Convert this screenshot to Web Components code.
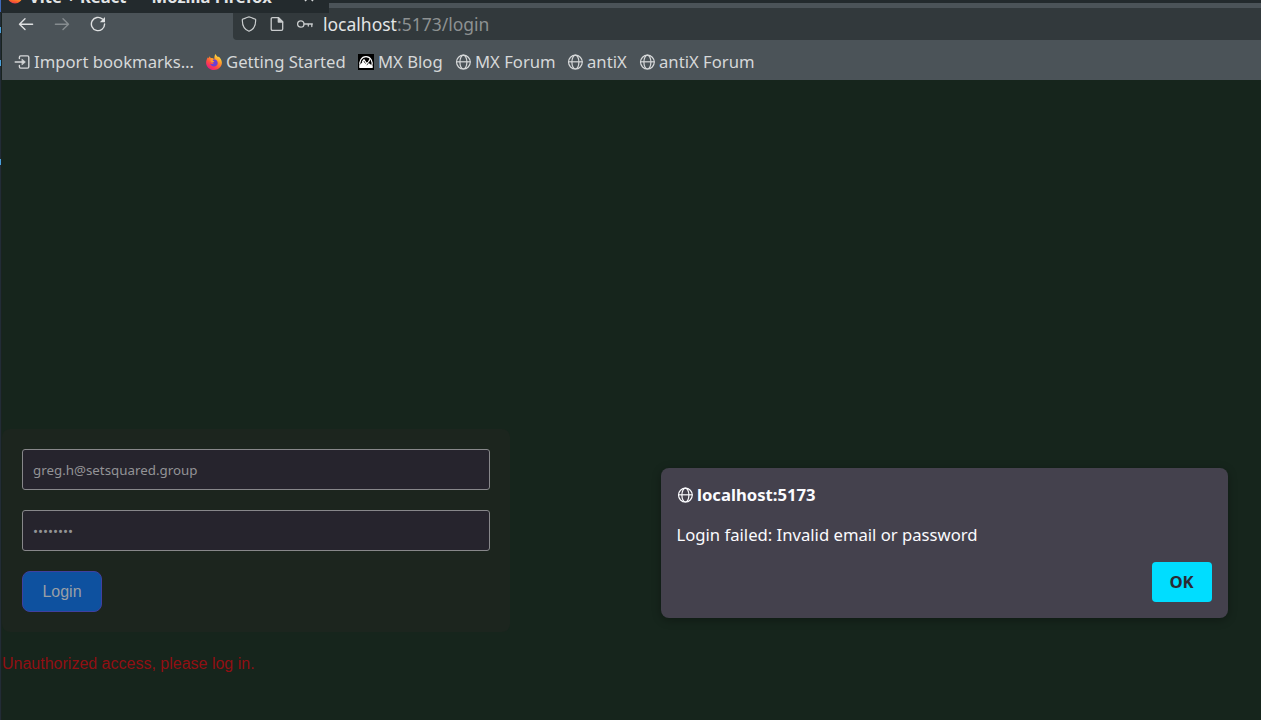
<!DOCTYPE html>
<html lang="en"><head><meta charset="utf-8"><title>Vite + React</title>
<style>html,body{margin:0;height:720px;overflow:hidden;background:#16251c}</style></head><body>
<browser-window></browser-window>
<script>
const define=(name,html)=>{const t=document.createElement('template');t.innerHTML=html;
customElements.define(name,class extends HTMLElement{constructor(){super();this.attachShadow({mode:'open'}).append(t.content.cloneNode(true));}});};

const icons={
globe:`<svg viewBox="0 0 16 16" fill="none" stroke="currentColor" stroke-width="1.2"><circle cx="8.400" cy="8.100" r="6.900"/><ellipse cx="8.400" cy="8.100" rx="3.500" ry="6.900"/><path d="M1.500 7.800h14"/></svg>`,
import:`<svg viewBox="0 0 16 16" fill="none" stroke="currentColor" stroke-width="1.4" stroke-linecap="round" stroke-linejoin="round"><path d="M5.400 4.600V3.200q0-1.300 1.300-1.300h6.800q1.300 0 1.300 1.300v9.600q0 1.300-1.300 1.300H6.700q-1.300 0-1.300-1.300v-1.400M1.200 8h8.400"/><path d="M8.200 5.200L11.400 8l-3.200 2.800z" fill="currentColor" stroke-width=".6"/></svg>`,
back:`<svg viewBox="0 0 16 16" fill="none" stroke="currentColor" stroke-width="1.4" stroke-linecap="round" stroke-linejoin="round"><path d="M14.600 8.200H1.600M7 2.800L1.500 8.200 7 13.600"/></svg>`,
forward:`<svg viewBox="0 0 16 16" fill="none" stroke="currentColor" stroke-width="1.4" stroke-linecap="round" stroke-linejoin="round"><path d="M1.400 8.200h13M9 2.800L14.500 8.200 9 13.600"/></svg>`,
reload:`<svg viewBox="0 0 16 16" fill="none" stroke="currentColor" stroke-width="1.4" stroke-linecap="round"><path d="M12.400 3.100A6.600 6.600 0 1 0 14.600 8"/><path d="M15 1v5.200H9.800z" fill="currentColor" stroke="none"/></svg>`,
shield:`<svg viewBox="0 0 16 16" fill="none" stroke="currentColor" stroke-width="1.2" stroke-linejoin="round"><path d="M8 .8Q9 .8 14.600 3.300C15 9.200 13 13.300 8 15.300 3 13.300 1 9.200 1.400 3.300Q7 .8 8 .8z"/></svg>`,
page:`<svg viewBox="0 0 16 16" fill="none" stroke="currentColor" stroke-width="1.3" stroke-linejoin="round"><path d="M3.500 1.600h6l4.200 4.200v7.300q0 1.300-1.300 1.300H3.500q-1.300 0-1.300-1.300V2.900q0-1.300 1.300-1.300z"/><path d="M9.300 1.600v4.500h4.400z" fill="currentColor"/></svg>`,
key:`<svg viewBox="0 0 16 16" fill="none" stroke="currentColor" stroke-width="1.3" stroke-linecap="round"><circle cx="3.800" cy="8" r="3.200"/><path d="M7 8h8.400M14.800 8v2.500M11.300 8v2"/></svg>`,
firefox:`<svg viewBox="0 0 16 16"><defs><linearGradient id="f" x1=".85" y1=".05" x2=".2" y2="1"><stop offset="0" stop-color="#fff04a"/><stop offset=".35" stop-color="#ff9a28"/><stop offset=".65" stop-color="#ff4a40"/><stop offset="1" stop-color="#e8118c"/></linearGradient></defs><path d="M9.600 0c.4 1.500 1.500 2.300 2.600 3.300l.3-.7c2 1.500 3.400 3.800 3.400 6.200C15.900 12.800 12.300 16 8 16S.1 12.700.1 8.700C.1 6.600.9 4.500 2 3.200l.7 1 1-1.900 1 1.600C6.500 4 7.400 4.300 8.400 5 8.300 3.300 8.500 1.300 9.600 0z" fill="url(#f)"/><path d="M6 5.600c2.800-1.200 5.700.6 5.700 3.400 0 2.200-1.700 3.600-3.700 3.600S4.500 11.200 4.300 9.600c1.200.9 2.900.6 3.500-.6-1-.3-2.500-.3-2.800-1.600z" fill="#6b3fd4"/><path d="M4.700 4.300c1.300-.3 2.300.2 3 .9L6.600 6.800l1.700.5c-.5 1.200-1.500 1.500-2.600 1.400-1-1-1.600-2.800-1-4.400z" fill="#ff9a2c"/></svg>`,
titlefox:`<svg viewBox="0 0 16 16"><defs><linearGradient id="g" x1=".6" y1="0" x2=".4" y2="1"><stop offset=".7" stop-color="#ff8a2a"/><stop offset=".88" stop-color="#f8582e"/><stop offset="1" stop-color="#dc3a60"/></linearGradient></defs><circle cx="8" cy="8" r="7.500" fill="url(#g)"/></svg>`,
mx:`<svg viewBox="0 0 16 16"><path fill="#000" d="M0 0h16v16H0z"/><path d="M2.300 12.500C.6 7.500 3.400 2.600 8 2.600s7.400 4.900 5.700 9.900" fill="none" stroke="#fff" stroke-width="1.200"/><path d="M1.300 14v-2.200L5.200 7l2.300 2.800L9.300 8l5.400 4v2z" fill="#fff"/><path d="M4.300 7.800L6 5.800l3.200 4.500 2.700-5" fill="none" stroke="#fff" stroke-width="1.200"/><path d="M8.800 11.200l2.200-3" stroke="#000" stroke-width=".7"/></svg>`};
customElements.define('ui-icon',class extends HTMLElement{constructor(){super();this.attachShadow({mode:'open'});}
connectedCallback(){this.shadowRoot.innerHTML=`<style>:host{display:block;width:16px;height:16px;flex:none}svg{display:block;width:100%;height:100%}</style>${icons[this.getAttribute('name')]}`;}});

define('title-strip',`<style>:host{display:flex;width:329px;height:13px;background:#232a2d;overflow:hidden;box-sizing:border-box;padding-left:7px;font:700 16.580px/22px "Noto Sans",sans-serif;color:#e2e5e6;white-space:pre}
ui-icon{margin-top:-12px}.t{margin:-14px 0 0 6px;width:244px;flex:none}.x{margin:-11px 0 0 31px;width:10px;height:14px;flex:none}</style>
<ui-icon name="titlefox"></ui-icon><div class="t">Vite + React — Mozilla Firefox</div><svg class="x" viewBox="0 0 10 14"><path d="M1 4l8 8M9 4l-8 8" stroke="#d5d8d9" stroke-width="1.500"/></svg>`);

define('address-bar',`<style>:host{display:flex;box-sizing:border-box;height:32px;background:#32393c;border-radius:4px 0 0 4px;padding:0 0 0 8px;align-items:center;color:#c9cccd;font:17.500px/24px "Noto Sans",sans-serif}
ui-icon{margin-right:12px}ui-icon:nth-of-type(3){margin-right:10px}b{font-weight:400;color:#e3e5e5}.u{color:#8d9192}</style>
<ui-icon name="shield"></ui-icon><ui-icon name="page"></ui-icon><ui-icon name="key"></ui-icon><div class="u"><b>localhost</b>:5173/login</div>`);

define('nav-bar',`<style>:host{display:grid;grid-template-columns:231px 1fr;height:40px;padding-top:8px;box-sizing:border-box}
nav{display:flex;gap:20px;padding:8px 0 0 16px;color:#dfe1e2}.off{color:#868c8f}</style>
<nav><ui-icon name="back"></ui-icon><ui-icon class="off" name="forward"></ui-icon><ui-icon name="reload"></ui-icon></nav><address-bar></address-bar>`);

define('book-mark',`<style>:host{display:flex;gap:4px;align-items:center;white-space:nowrap}</style><slot name="icon"></slot><span><slot></slot></span>`);
define('bookmark-bar',`<style>:host{display:grid;grid-template-columns:192px 152px 97px 112px 72px 130px;height:40px;padding:4px 0 0 12px;box-sizing:border-box;font:16.667px/24px "Noto Sans",sans-serif;color:#d6d8d9}</style>
<book-mark><ui-icon slot="icon" name="import"></ui-icon>Import bookmarks…</book-mark><book-mark><ui-icon slot="icon" name="firefox"></ui-icon>Getting Started</book-mark><book-mark><ui-icon slot="icon" name="mx"></ui-icon>MX Blog</book-mark><book-mark><ui-icon slot="icon" name="globe"></ui-icon>MX Forum</book-mark><book-mark><ui-icon slot="icon" name="globe"></ui-icon>antiX</book-mark><book-mark><ui-icon slot="icon" name="globe"></ui-icon>antiX Forum</book-mark>`);

define('text-field',`<style>:host{display:flex;align-items:center;box-sizing:border-box;height:41px;border:1px solid #87878a;border-radius:3px;background:#26242d;color:#939396;padding-left:10px;font:13.333px/18px "Noto Sans",sans-serif}</style><slot></slot>`);
define('login-form',`<style>:host{display:flex;flex-direction:column;gap:20px;box-sizing:border-box;width:508px;height:203px;padding:20px;border-radius:8px;background:#1c251e}
button{align-self:flex-start;width:80px;height:41px;border:1px solid #4040a0;border-radius:8px;background:#0e519f;color:#999fa6;font:16px "Liberation Sans",Arial,sans-serif;padding:0}</style>
<text-field>greg.h@setsquared.group</text-field><text-field>••••••••</text-field><button>Login</button>`);

define('alert-dialog',`<style>:host{display:flex;flex-direction:column;box-sizing:border-box;width:567px;height:150px;padding:15px 16px 16px;border-radius:8px;background:#44414d;color:#fbfbfe;box-shadow:0 2px 10px rgba(0,0,0,.3);font:16.667px/23px "Noto Sans",sans-serif}
header{display:flex;gap:4px;font-weight:700;height:22px;align-items:center}header ui-icon{margin-top:1px}p{margin:18px 0 0 -.5px;height:23px}
button{margin:16px 0 0;align-self:flex-end;width:60px;height:40px;flex:none;border:0;border-radius:4px;background:#00ddff;color:#2b2a33;font:700 16.667px "Noto Sans",sans-serif;padding:0 1px 2px 0}</style>
<header><ui-icon name="globe"></ui-icon>localhost:5173</header><p>Login failed: Invalid email or password</p><button>OK</button>`);

define('login-page',`<style>:host{display:grid;grid-template-columns:659px 567px;height:640px;box-sizing:border-box;background:#16251c;align-items:start}
section{padding-top:349px}alert-dialog{margin-top:388px}p{margin:22px 0 0;font:16px/20px "Liberation Sans",Arial,sans-serif;color:#910f13}</style>
<section><login-form></login-form><p>Unauthorized access, please log in.</p></section><alert-dialog></alert-dialog>`);

define('desktop-edge',`<style>:host{display:block;height:720px;background:linear-gradient(#49a0dc,#49a0dc) 0 27px/1px 6px no-repeat,linear-gradient(#49a0dc,#49a0dc) 0 60px/1px 6px no-repeat,linear-gradient(#49a0dc,#49a0dc) 0 159px/1px 6px no-repeat,linear-gradient(90deg,#222c36 1px,#19231f 1px)}</style>`);
define('browser-window',`<style>:host{display:grid;grid-template-columns:2px 1fr;width:1261px;height:720px;position:relative;overflow:hidden}
.chrome{background:linear-gradient(#232a2d 3px,#4b5358 3px);height:80px}
title-strip{position:absolute;left:0;top:0}.edge{position:absolute;left:0;top:0;width:1px;height:12px;background:#3f68b8}</style>
<desktop-edge></desktop-edge><main><div class="chrome"><nav-bar></nav-bar><bookmark-bar></bookmark-bar></div><login-page></login-page></main><title-strip></title-strip><div class="edge"></div>`);
</script></body></html>
